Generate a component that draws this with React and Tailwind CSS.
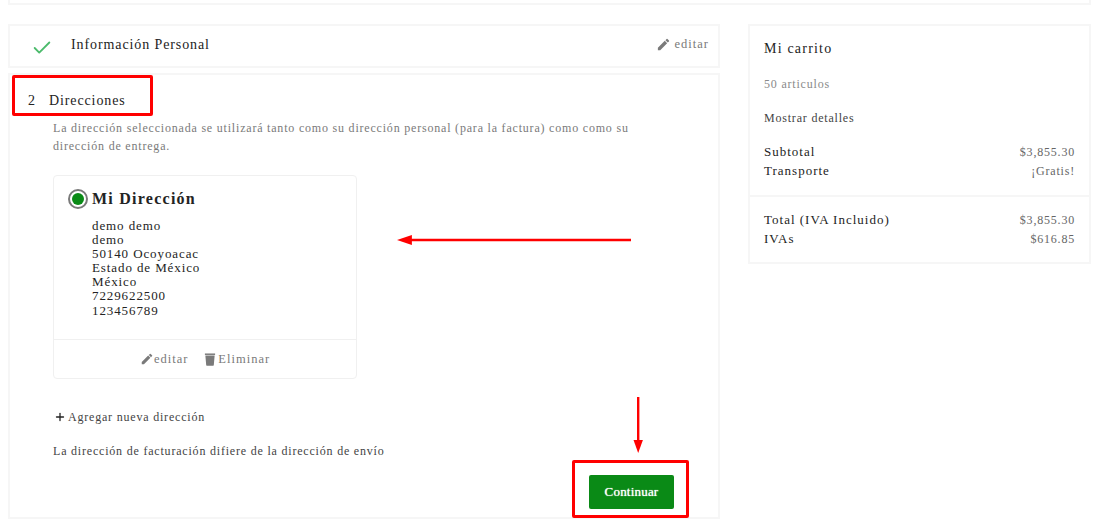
import { Check, Plus } from "lucide-react";

const PencilIcon = ({ className }) => (
  <svg viewBox="0 0 24 24" className={className} fill="#7a7a7a">
    <path d="M3 17.25V21h3.75L17.81 9.94l-3.75-3.75L3 17.25zM20.71 7.04a1 1 0 0 0 0-1.41l-2.34-2.34a1 1 0 0 0-1.41 0l-1.83 1.83 3.75 3.75 1.83-1.83z" />
  </svg>
);

const TrashIcon = ({ className }) => (
  <svg viewBox="0 0 12 14" className={className} fill="#7a7a7a">
    <path d="M0.5 0.5h11v1.6H0.5z" />
    <path d="M1 2.8h10l-0.9 10.2c0 .3-.3.6-.6.6h-7c-.3 0-.6-.3-.6-.6z" />
  </svg>
);

const Arrow = ({ className, vertical }) =>
  vertical ? (
    <svg viewBox="0 0 14 60" className={className}>
      <path d="M6 0h2.4v44H6z" fill="#f00" />
      <path d="M2.5 43h9.4L7.2 56z" fill="#f00" />
    </svg>
  ) : (
    <svg viewBox="0 0 236 12" className={className}>
      <path d="M14 4.8h222v2.4H14z" fill="#f00" />
      <path d="M0 6l15-5v10z" fill="#f00" />
    </svg>
  );

const Row = ({ label, value }) => (
  <div className="flex justify-between h-[19px] items-center">
    <span className="text-[13px] tracking-[1px] text-[#232323]">{label}</span>
    <span className="text-[#666]">{value}</span>
  </div>
);

export default function App() {
  return (
    <div className="relative h-[524px] w-[1114px] overflow-hidden bg-white font-['Liberation_Serif',serif] text-[12px] tracking-[0.8px] text-[#232323]">
      <div className="ml-2 h-[5px] w-[1083px] border-2 border-t-0 border-[#f6f6f6]" />
      <div className="mt-[19px] ml-2 flex gap-[28px]">
        <div className="flex w-[712px] flex-col gap-[5px]">
          <section className="flex h-11 items-center border-2 border-[#f6f6f6] pr-[9px]">
            <Check className="ml-[21px] mt-1 h-[22px] w-[22px] text-[#4cbb6c]" strokeWidth={2} />
            <h2 className="ml-[18px] mb-[3px] text-[14px] tracking-[0.9px]">Información Personal</h2>
            <button className="ml-auto mb-[3px] flex items-center gap-1 text-[12.5px] tracking-[1px] text-[#7a7a7a]">
              <PencilIcon className="h-[15px] w-[15px]" />
              editar
            </button>
          </section>
          <section className="h-[446px] border-2 border-[#f6f6f6] pl-[43px]">
            <h2 className="-ml-[25px] mt-[15px] flex gap-[13px] text-[14px] tracking-[0.9px]">
              <span>2</span>
              <span>Direcciones</span>
            </h2>
            <p className="mt-[8px] w-[600px] leading-[18px] text-[#7a7a7a]">
              La dirección seleccionada se utilizará tanto como su dirección personal (para la factura) como como su dirección de entrega.
            </p>
            <div className="mt-[20px] w-[304px] rounded border border-[#f0f0f0]">
              <div className="h-[163px] pl-[15px] pt-[11px]">
                <div className="flex items-center gap-[4px]">
                  <span className="-ml-px flex h-5 w-5 items-center justify-center rounded-full border-2 border-[#7a7a7a]">
                    <span className="h-[12px] w-[12px] rounded-full bg-[#0a8a16]" />
                  </span>
                  <span className="text-[16px] font-bold tracking-[1.25px]">Mi Dirección</span>
                </div>
                <address className="mt-[8px] ml-[23px] text-[13px] leading-[14.1px] tracking-[0.9px] not-italic">
                  demo demo<br />demo<br />50140 Ocoyoacac<br />Estado de México<br />México<br />7229622500<br />123456789
                </address>
              </div>
              <div className="flex h-[39px] items-center justify-center gap-4 border-t border-[#f0f0f0] text-[12.5px] tracking-[1px] text-[#7a7a7a]">
                <span className="flex items-center">
                  <PencilIcon className="h-[14px] w-[14px]" />
                  editar
                </span>
                <span className="flex items-center gap-[2px]">
                  <TrashIcon className="h-[13px] w-[12px]" />
                  Eliminar
                </span>
              </div>
            </div>
            <div className="mt-[29px] ml-[1px] flex items-center">
              <Plus className="h-3 w-3 text-[#232323]" strokeWidth={2.6} />
              <span className="ml-[2px] text-[#444]">Agregar nueva dirección</span>
            </div>
            <p className="mt-[16px] text-[#444]">La dirección de facturación difiere de la dirección de envío</p>
            <div className="mt-[15px] flex w-[621px] justify-end">
              <button className="h-[34px] w-[85px] rounded-[2px] bg-[#0a8a16] text-center text-[13px] tracking-[0.2px] text-white [text-shadow:0_0_1px_#fff]">
                Continuar
              </button>
            </div>
          </section>
        </div>
        <aside className="h-[240px] w-[343px] border-2 border-[#f6f6f6]">
          <div className="h-[169px] pl-[14px] pr-[14px] pt-[12px]">
            <h3 className="text-[14px] tracking-[1.2px]">Mi carrito</h3>
            <p className="mt-[16px] text-[#8a8a8a]">50 articulos</p>
            <p className="mt-[16px] text-[#444]">Mostrar detalles</p>
            <div className="mt-[15px]">
              <Row label="Subtotal" value="$3,855.30" />
              <Row label="Transporte" value="¡Gratis!" />
            </div>
          </div>
          <div className="border-t-2 border-[#f6f6f6] pl-[14px] pr-[14px] pt-[13px]">
            <Row label="Total (IVA Incluido)" value="$3,855.30" />
            <Row label="IVAs" value="$616.85" />
          </div>
        </aside>
      </div>

      {/* red marks drawn over the screenshot */}
      <div className="absolute left-[12px] top-[75px] h-[41px] w-[141px] rounded-[2px] border-[3px] border-[#f00]" />
      <div className="absolute left-[572px] top-[460px] h-[58px] w-[117px] rounded-[2px] border-[3px] border-[#f00]" />
      <Arrow className="absolute left-[397px] top-[234px] h-3 w-[234px]" />
      <Arrow vertical className="absolute left-[631px] top-[397px] h-[60px] w-[14px]" />
    </div>
  );
}
